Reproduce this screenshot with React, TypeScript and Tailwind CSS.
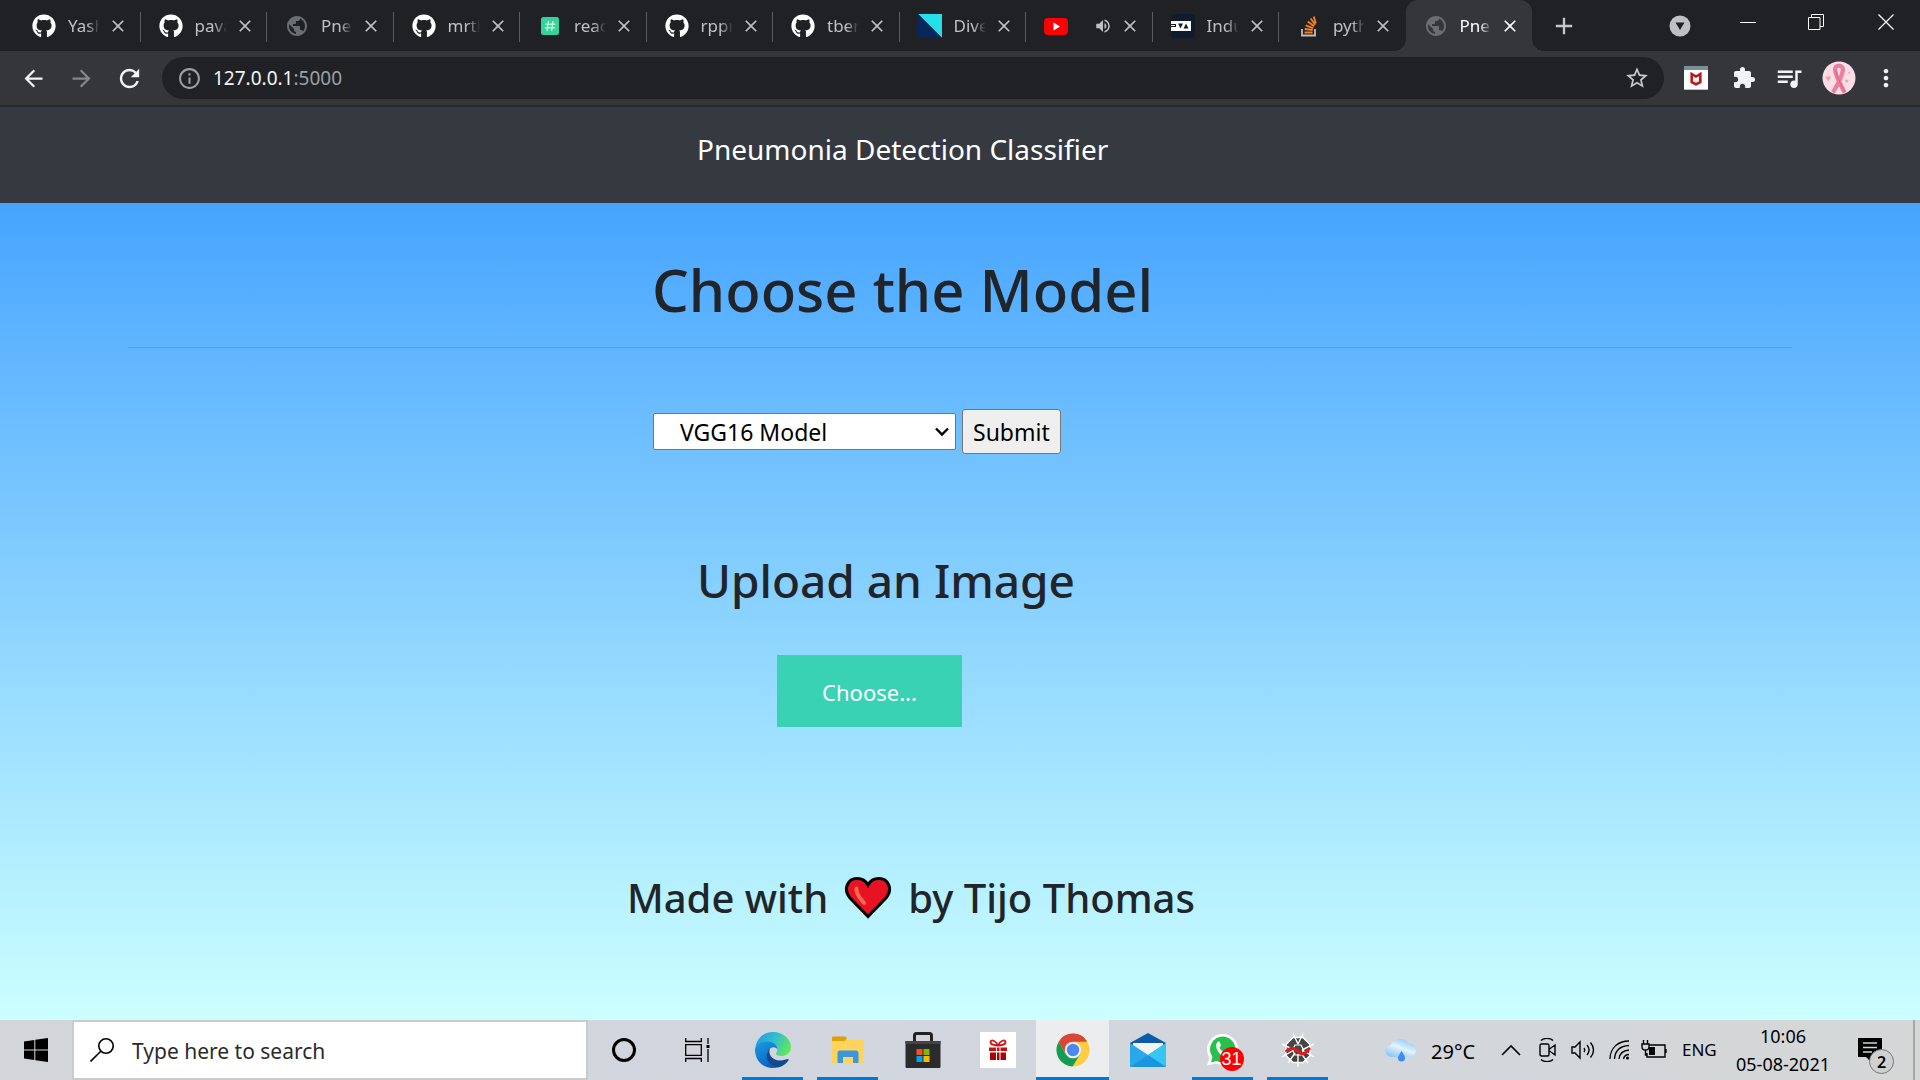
import React from 'react'
import {
  MdAdd,
  MdArrowBack,
  MdArrowForward,
  MdClose,
  MdExtension,
  MdInfoOutline,
  MdMoreVert,
  MdPublic,
  MdQueueMusic,
  MdRefresh,
  MdStarBorder,
  MdVolumeUp,
} from 'react-icons/md'
import { FaGithub } from 'react-icons/fa'

type TabItem = {
  title: string
  icon: React.ReactNode
  playing?: boolean
  active?: boolean
}

const GithubIcon = () => <FaGithub className="size-6 text-white" />

const GlobeIcon = () => <MdPublic className="size-6 text-[#6a6e73]" />

const HashIcon = () => (
  <svg viewBox="0 0 24 24" className="size-6">
    <rect x="3" y="3" width="18" height="18" rx="2.5" fill="#34d399" />
    <path d="M10.5 7 9 17M15 7l-1.500 10M7.500 10.300h10M6.800 13.800h10" stroke="#b9f8dc" strokeWidth="1.500" fill="none" />
  </svg>
)

const DiveIcon = () => (
  <svg viewBox="0 0 24 24" className="size-6">
    <path d="M0 0h24v24z" fill="#22dfea" />
    <path d="M0 0v24h24z" fill="#04285c" />
  </svg>
)

const YoutubeIcon = () => (
  <svg viewBox="0 0 24 24" className="size-6">
    <rect y="4" width="24" height="17" rx="4" fill="#f00" />
    <path d="M9.500 8.500v8l6.500-4z" fill="#fff" />
  </svg>
)

const InduIcon = () => (
  <svg viewBox="0 0 24 24" className="size-6">
    <rect width="24" height="24" rx="4" fill="#101c2b" />
    <path d="M0 7h20v10H0z" fill="#fff" />
    <path d="M0 10h5v3H0zM7 9.500h5l-2.500 5zM12.500 14.500h5L15 9.500z" fill="#101c2b" />
    <path d="M0 11.500h4" stroke="#fff" />
  </svg>
)

const StackIcon = () => (
  <svg viewBox="0 0 24 24" className="size-6" fill="none">
    <path d="M5 15v6.500h13V15" stroke="#bcbec0" strokeWidth="1.800" />
    <path d="M7.500 18.500h8M7.700 15l8 1M8.700 11.300l7.500 2.800M10.800 7.400l6.300 4.900M13.700 4.500l4.500 6.300M16.800 2.500l2 7" stroke="#f48024" strokeWidth="1.900" />
  </svg>
)

const TABS: TabItem[] = [
  { title: 'Yash', icon: <GithubIcon /> },
  { title: 'pava', icon: <GithubIcon /> },
  { title: 'Pneu', icon: <GlobeIcon /> },
  { title: 'mrtk', icon: <GithubIcon /> },
  { title: 'reac', icon: <HashIcon /> },
  { title: 'rppr', icon: <GithubIcon /> },
  { title: 'tber', icon: <GithubIcon /> },
  { title: 'Dive', icon: <DiveIcon /> },
  { title: '', icon: <YoutubeIcon />, playing: true },
  { title: 'Indu', icon: <InduIcon /> },
  { title: 'pyth', icon: <StackIcon /> },
  { title: 'Pne', icon: <GlobeIcon />, active: true },
]

const Tab = ({ tab }: { tab: TabItem }) => (
  <div
    className={
      tab.active
        ? 'relative flex h-full min-w-0 flex-1 items-center rounded-t-xl bg-[#35363a] pl-[18px] text-white'
        : 'relative flex h-full min-w-0 flex-1 items-center pl-[18px] text-[#bdc1c6]'
    }
  >
    {tab.active && (
      <>
        <span className="absolute bottom-0 -left-3 size-3 bg-[radial-gradient(circle_at_0_0,#202124_12px,#35363a_12px)]" />
        <span className="absolute -right-3 bottom-0 size-3 bg-[radial-gradient(circle_at_100%_0,#202124_12px,#35363a_12px)]" />
      </>
    )}
    <button type="button" className="flex items-center gap-3" aria-label={tab.title || 'Video'}>
      {tab.icon}
      {tab.playing ? (
        <span className="flex w-8 justify-end">
          <MdVolumeUp className="size-[18px]" />
        </span>
      ) : (
        <span className="w-8 overflow-hidden mask-[linear-gradient(90deg,#000_60%,transparent)] text-left text-[17px] leading-6 whitespace-nowrap">
          {tab.title}
        </span>
      )}
    </button>
    <button type="button" className="ml-2 shrink-0" aria-label="Close tab">
      <MdClose className="size-5" />
    </button>
    {!tab.active && tab.title !== 'pyth' && (
      <span className="absolute top-3 right-0 h-[30px] w-px bg-[#5a5c60]" />
    )}
  </div>
)

const TabStrip = () => (
  <div className="flex h-[51px] bg-[#202124] pl-[14px]">
    <div className="flex min-w-0 flex-1">
      {TABS.map((tab, i) => (
        <Tab key={i} tab={tab} />
      ))}
    </div>
    <div className="flex w-[388px] shrink-0 justify-between pr-[26px] pl-[18px] text-white">
      <button type="button" aria-label="New tab" className="self-center">
        <MdAdd className="size-7 text-[#c4c7cb]" />
      </button>
      <div className="flex h-[43px] items-center">
        <button type="button" aria-label="Search tabs" className="mt-2 mr-[49px]">
          <svg viewBox="0 0 22 22" className="size-[22px]">
            <circle cx="11" cy="11" r="10.500" fill="#bdc1c6" />
            <path d="M6.500 7.500h9L11 15z" fill="#202124" />
          </svg>
        </button>
        <button type="button" aria-label="Minimize" className="mr-[52px]">
          <svg viewBox="0 0 16 16" className="size-4" fill="none" stroke="currentColor">
            <path d="M0 8.500h16" />
          </svg>
        </button>
        <button type="button" aria-label="Restore" className="mr-[54px]">
          <svg viewBox="0 0 16 16" className="size-4" fill="none" stroke="currentColor">
            <path d="M.5 3.500h11.500v12H.5zM3.500 3.500v-3h12v12H12" />
          </svg>
        </button>
        <button type="button" aria-label="Close">
          <svg viewBox="0 0 16 16" className="size-4" fill="none" stroke="currentColor" strokeWidth="1.300">
            <path d="m.5.5 15 15M15.500.5l-15 15" />
          </svg>
        </button>
      </div>
    </div>
  </div>
)

const McAfeeIcon = () => (
  <svg viewBox="0 0 24 24" className="size-6">
    <rect width="24" height="24" rx="1" fill="#fff" />
    <path d="M0 0h24v4H0z" fill="#78909c" />
    <path d="M0 23h24v1H0z" fill="#bbb" />
    <path d="M7.700 8v8.200l4.300 2 4.300-2V8L12 10.500z" fill="none" stroke="#c01818" strokeWidth="2.600" />
  </svg>
)

const RibbonAvatar = () => (
  <svg viewBox="0 0 34 34" className="size-[34px]">
    <circle cx="17" cy="17" r="16.500" fill="#fbdde6" />
    <path d="M4 17c-1-2 1.500-2.500 2.500-1 .5-2 3-1 2 1l-2.200 3.500zM23 20c-.5-1.500 1-2 1.800-.8.800-1.200 2.200-.4 1.500 1L25 22zM26 11l1.300 2.300 1-2.600z" fill="#f3a3a8" />
    <path d="M22.500 31.500C19 24 13.500 15 13 8.500c-.2-5 8-5 8 0C20.500 15 15.500 24 11 31.500" fill="none" stroke="#ea7fa0" strokeWidth="4.200" />
    <path d="M13.300 8.500c1 7 5.500 15 9.500 22.500" fill="none" stroke="#e0668c" strokeWidth="1.200" />
  </svg>
)

const Toolbar = () => (
  <div className="flex h-[56px] items-center border-b-2 border-[#28292b] bg-[#35363a] px-5 text-[#f1f3f4]">
    <button type="button" aria-label="Back">
      <MdArrowBack className="size-[27px]" />
    </button>
    <button type="button" aria-label="Forward" className="ml-[21px] text-[#85878a]">
      <MdArrowForward className="size-[27px]" />
    </button>
    <button type="button" aria-label="Reload" className="ml-5">
      <MdRefresh className="size-[29px]" />
    </button>
    <div className="ml-[18px] flex h-[42px] flex-1 items-center rounded-full bg-[#202124] pr-[14px] pl-[15px]">
      <MdInfoOutline className="size-[25px] text-[#9aa0a6]" />
      <div className="relative ml-[11px] flex-1 text-[19px] leading-[42px]">
        <span aria-hidden="true">
          127.0.0.1<span className="text-[#9aa0a6]">:5000</span>
        </span>
        <input
          type="text"
          aria-label="Address"
          defaultValue="127.0.0.1:5000"
          className="absolute inset-0 w-full text-transparent outline-none"
        />
      </div>
      <button type="button" aria-label="Bookmark this page">
        <MdStarBorder className="size-[26px] text-[#c4c7cb]" />
      </button>
    </div>
    <div className="ml-5 flex items-center">
      <McAfeeIcon />
      <MdExtension className="ml-6 size-6" />
      <MdQueueMusic className="ml-[18px] size-[30px]" />
      <span className="ml-[18px]">
        <RibbonAvatar />
      </span>
      <button type="button" aria-label="Menu" className="ml-4">
        <MdMoreVert className="size-7" />
      </button>
    </div>
  </div>
)

const HeartIcon = () => (
  <svg viewBox="0 0 48 44" className="h-11 w-12">
    <path
      d="M24 40.500 6 22C-1.500 13 4 2.500 13 2.500c5 0 9 2.500 11 6.500 2-4 6-6.500 11-6.500 9 0 14.500 10.500 7 19.500z"
      fill="#e81224"
      stroke="#000"
      strokeWidth="3"
    />
    <path d="M12.500 12.500c-.5 6 4 10.500 7.500 14.500" fill="none" stroke="#f4694f" strokeWidth="4" strokeLinecap="round" />
  </svg>
)

const Page = () => (
  <div className="flex flex-1 flex-col bg-linear-to-b from-[#3399ff] to-[#ccffff] text-[#212529]">
    <nav className="h-24 bg-[#343a40] pt-[22px] pl-[697px]">
      <a href="#" className="text-[28px] leading-10 text-white">
        Pneumonia Detection Classifier
      </a>
    </nav>
    <main className="mx-32 pt-[51px]">
      <h1 className="ml-[524px] text-[58px] leading-[72px] font-medium">Choose the Model</h1>
      <hr className="mt-[21px] border-black/10" />
      <form className="mt-[61px] ml-[525px] flex items-center gap-[6px] text-[23px]" onSubmit={(e) => e.preventDefault()}>
        <div className="relative">
          <select
            aria-label="Model"
            className="h-[37px] w-[303px] appearance-none rounded-xs border border-[#767676] bg-white pl-[26px] leading-8 text-black"
          >
            <option>VGG16 Model</option>
          </select>
          <svg viewBox="0 0 14 10" className="pointer-events-none absolute top-[14px] right-[7px] h-[10px] w-[14px]">
            <path d="m1 1.500 6 6 6-6" fill="none" stroke="#000" strokeWidth="2.400" />
          </svg>
        </div>
        <button type="submit" className="h-[45px] rounded-[3px] border border-[#767676] bg-[#efefef] px-[10px] leading-8 text-black">
          Submit
        </button>
      </form>
      <h2 className="mt-[97px] ml-[569px] text-[46px] leading-[58px] font-medium">Upload an Image</h2>
      <label className="mt-[46px] ml-[649px] flex h-[72px] w-[185px] items-center justify-center bg-[#39d2b4] pt-[2px] text-[22px] text-white">
        Choose...
        <input type="file" accept="image/*" className="sr-only" />
      </label>
      <h3 className="mt-[146px] ml-[499px] flex items-center text-[40px] leading-[50px] font-medium">
        Made with
        <span className="mx-4">
          <HeartIcon />
        </span>
        by Tijo Thomas
      </h3>
    </main>
  </div>
)

const EdgeIcon = () => (
  <svg viewBox="0 0 36 36" className="size-9">
    <defs>
      <linearGradient id="edgeTop" x1="0" y1="0.300" x2="1" y2="0.700">
        <stop offset="0" stopColor="#1f9fe0" />
        <stop offset="0.500" stopColor="#35c1c8" />
        <stop offset="1" stopColor="#66eb4e" />
      </linearGradient>
      <linearGradient id="edgeLeft" x1="0" y1="0" x2="0.500" y2="1">
        <stop offset="0" stopColor="#1b9de2" />
        <stop offset="1" stopColor="#0a63c0" />
      </linearGradient>
    </defs>
    <path d="M.5 15C2 6 9 0 18 0c10 0 18 7 18 15 0 6-5 9-9 9-4.500 0-6-1.500-6-2.500s1.500-1.500 1.500-4c0-4-4-7-9-7C7 10.500 2 13 .5 15z" fill="url(#edgeTop)" />
    <path d="M0 18C0 13 6 9.500 12.500 9.500c6 0 10 4 10 8-2-3-6-3-8.500 0-5 7 0 16 8 18C9.500 38.500 0 29 0 18z" fill="url(#edgeLeft)" />
    <path d="M15.500 15.500c-3.500 6 1.500 13 9.500 13 4 0 6-1.500 8-1.500 1 0 .8 1 0 2-3 4-7.500 6.500-11.500 6.500-8-1.500-14-12-6-20z" fill="#114a8b" />
  </svg>
)

const FolderIcon = () => (
  <svg viewBox="0 0 32 28" className="h-7 w-8">
    <path d="M0 1h13l2 3H32v23H0z" fill="#ffd45e" />
    <path d="M0 2c0-1 .5-1.500 1.500-1.500h12l1.500 2-2.500 2.500H0z" fill="#e0a008" />
    <path d="M5.500 27V17c0-1.500 1-2.500 2.500-2.500h16c1.500 0 2.500 1 2.500 2.500v10H21v-6H11v6z" fill="#3a96dd" />
  </svg>
)

const StoreIcon = () => (
  <svg viewBox="0 0 36 36" className="size-9">
    <path d="M9.500 13V3.500c0-1.500.5-2 2-2h13c1.500 0 2 .5 2 2V13" fill="none" stroke="#222" strokeWidth="3" />
    <path d="M.5 9h35v25.500c0 1-.5 1.500-1.500 1.500H2c-1 0-1.500-.5-1.500-1.500z" fill="#2b2b2b" />
    <path d="M.5 9h35v3H.5z" fill="#444" />
    <path d="M11.500 17h6v6h-6z" fill="#f25022" />
    <path d="M18.500 17h6v6h-6z" fill="#7fba00" />
    <path d="M11.500 24h6v6h-6z" fill="#00a4ef" />
    <path d="M18.500 24h6v6h-6z" fill="#ffb900" />
  </svg>
)

const GiftIcon = () => (
  <svg viewBox="0 0 36 36" className="size-9">
    <path d="M0 0h36v36H0z" fill="#fff" />
    <path d="M18 13.500c-2-5-7-6.500-7.500-3.500-.3 2.500 4 3.500 7.500 3.500zm0 0c2-5 7-6.500 7.500-3.500.3 2.500-4 3.500-7.500 3.500z" fill="none" stroke="#d01418" strokeWidth="1.800" />
    <path d="M9 15.500h7v3.500H9zM20.500 15.500h6.500v3.500h-6.500zM17 15.500h2.500v3.500H17z" fill="#c81014" />
    <path d="M10 20.500h6v7.500h-6zM20.500 20.500H26v7.500h-5.500zM17 20.500h2.500v7.500H17z" fill="#a80508" />
  </svg>
)

const ChromeIcon = () => (
  <svg viewBox="0 0 34 34" className="size-[34px]">
    <circle cx="17" cy="17" r="16.500" fill="#ffcd40" />
    <path d="M2.700 8.700A16.500 16.500 0 0 1 31.300 8.700H17a8.300 8.300 0 0 0-7.200 12.400z" fill="#db4437" />
    <path d="M2.700 8.700A16.500 16.500 0 0 0 16.500 33.500l7.700-12.300a8.300 8.300 0 0 1-14.400 0z" fill="#0f9d58" />
    <circle cx="17" cy="17" r="8" fill="#f1f1f1" />
    <circle cx="17" cy="17" r="6.200" fill="#4a88f4" />
  </svg>
)

const MailIcon = () => (
  <svg viewBox="0 0 36 34" className="h-[34px] w-9">
    <path d="M0 10 18 0l18 10v6H0z" fill="#0d5cab" />
    <path d="M3 10h30v6L18 25 3 16z" fill="#f4f4f4" />
    <path d="M0 10l18 12L36 10v24H0z" fill="#2aa9ea" />
    <path d="M18 22 36 10v24z" fill="#36c5f4" />
    <path d="M18 22 36 34H0z" fill="#1488d8" opacity=".6" />
  </svg>
)

const WhatsappIcon = () => (
  <span className="relative">
    <svg viewBox="0 0 34 34" className="size-[34px]">
      <path d="M17 1a16 15.500 0 1 1-7.500 29.500L1 32.500l2.500-7.800A15.500 15.500 0 0 1 17 1z" fill="#fff" />
      <path d="M17 3.500a13 13 0 1 1-6.500 24.500l-5.500 1.500 1.500-5.500A13 13 0 0 1 17 3.500z" fill="#28c04c" />
      <path d="M11 9.500c1.500-1.500 2.500-1 3 .5l1 2.500-1.500 2c1 2.500 3 4.500 5.500 5.500l2-1.500 3.500 1.500c.5 3-2.500 4.500-5 4C13.500 22.500 8 15 11 9.500z" fill="#fff" />
    </svg>
    <span className="absolute -right-1 -bottom-1 flex size-6 items-center justify-center rounded-full bg-[#f00] font-['Liberation_Sans',sans-serif] text-[18px] leading-6 text-white">
      31
    </span>
  </span>
)

const SpiderIcon = () => (
  <svg viewBox="0 0 36 36" className="size-9" fill="none">
    <path d="M13 5.500h10l7 7v11l-7 7H13l-7-7v-11z" fill="#454545" />
    <path d="M18 12 13 1.500M18 12l5-10.500M14 18 2 12M14 18 2 25M22 18l12-6M22 18l12 7M18 22v13M15 21 8 31M21 21l7 10" stroke="#fff" strokeWidth="1.400" />
    <path d="M13 5.500h10l7 7v11l-7 7H13l-7-7v-11z" stroke="#fff" strokeWidth="1.500" />
    <path d="M15 13h6l2.500 5-2.500 5h-6l-2.500-5z" stroke="#fff" strokeWidth="1.200" />
    <path d="M6 20c3-4 6-5 10-2s7 5 9 3 3-3 5-5" stroke="#e3191b" strokeWidth="3" />
  </svg>
)

const TaskViewIcon = () => (
  <svg viewBox="0 0 26 24" className="h-6 w-[26px]" fill="none" stroke="#000" strokeWidth="1.300">
    <path d="M.7 6.700h15.600v10.600H.7zM.7 0v3.500h15.600V0M.7 24v-3.500h15.600V24M23 0v6M23 11v13" />
    <path d="M21.500 7h3v3h-3z" fill="#000" stroke="none" />
  </svg>
)

type AppItem = {
  name: string
  icon: React.ReactNode
  running?: boolean
  focused?: boolean
}

const APPS: AppItem[] = [
  { name: 'Task View', icon: <TaskViewIcon /> },
  { name: 'Edge', icon: <EdgeIcon />, running: true },
  { name: 'File Explorer', icon: <FolderIcon />, running: true },
  { name: 'Store', icon: <StoreIcon /> },
  { name: 'Rewards', icon: <GiftIcon /> },
  { name: 'Chrome', icon: <ChromeIcon />, focused: true },
  { name: 'Mail', icon: <MailIcon /> },
  { name: 'WhatsApp', icon: <WhatsappIcon />, running: true },
  { name: 'Spyder', icon: <SpiderIcon />, running: true },
]

const AppButton = ({ app }: { app: AppItem }) => (
  <button
    type="button"
    aria-label={app.name}
    className="relative flex h-full w-[75px] shrink-0 items-center justify-center"
  >
    {app.focused && <span className="absolute inset-x-px inset-y-0 border-b-3 border-[#0078d7] bg-[#ecedef]" />}
    {app.running && <span className="absolute inset-x-[7px] bottom-0 h-[3px] bg-[#0078d7]" />}
    <span className="relative flex">{app.icon}</span>
  </button>
)

const WeatherIcon = () => (
  <svg viewBox="0 0 32 24" className="h-6 w-8">
    <defs>
      <linearGradient id="cloud" x1="0.800" y1="0" x2="0.200" y2="1">
        <stop offset="0" stopColor="#8cc0f2" />
        <stop offset="0.500" stopColor="#e2f4ff" />
        <stop offset="1" stopColor="#8cc3f3" />
      </linearGradient>
    </defs>
    <path d="M7 19a6 6 0 0 1-1-12C8 1.500 15-1.500 21 3c1 .8 1.500 1.500 2 2.500 5-.5 8 2.500 8 6.500s-3 7-7 7z" fill="url(#cloud)" />
    <path d="M16.500 13c2 3 3.500 5 3.500 7a3.500 3.500 0 0 1-7 0c0-2 1.500-4 3.500-7z" fill="#3c8ff0" />
  </svg>
)

const Tray = () => (
  <div className="flex h-full shrink-0 items-center text-black">
    <WeatherIcon />
    <span className="ml-[14px] w-[52px] pt-[3px] text-[20px] leading-6">29°C</span>
    <svg viewBox="0 0 20 12" className="ml-[18px] h-3 w-5" fill="none" stroke="#000" strokeWidth="1.600">
      <path d="m1 11 9-9 9 9" />
    </svg>
    <svg viewBox="0 0 18 24" className="ml-[18px] h-6 w-[18px]" fill="none" stroke="#000" strokeWidth="1.400">
      <path d="M1 7.500c0-1 .5-1.500 1.500-1.500h6c1 0 1.500.5 1.500 1.500v9c0 1-.5 1.500-1.500 1.500h-6C1.500 18 1 17.500 1 16.500zM10.500 11l5.500-4v10l-5.500-4M2 2.500C5-.3 11-.3 14 2.500M2 21.500c3 2.800 9 2.800 12 0" />
    </svg>
    <svg viewBox="0 0 24 20" className="ml-[14px] h-5 w-6" fill="none" stroke="#000" strokeWidth="1.400">
      <path d="M1 7h3l5-5v16l-5-5H1zM13 8c1 1.300 1 2.700 0 4M16 5c2.500 3 2.500 7 0 10M19.500 2.500c4 4.500 4 10.500 0 15" />
    </svg>
    <svg viewBox="0 0 22 22" className="ml-[14px] size-[22px]" fill="none" stroke="#000" strokeWidth="1.300">
      <path d="M1 20C1 9 9 2 20 2M5.500 20C6 12 11 7 20 6.500M10 20c.5-5 4-8.500 10-9M14.500 20c.5-2.500 2-4.500 5.500-4.500" />
      <circle cx="18.500" cy="19" r="1.500" fill="#000" stroke="none" />
    </svg>
    <svg viewBox="0 0 26 20" className="ml-[10px] h-5 w-[26px]" fill="none" stroke="#000" strokeWidth="1.400">
      <path d="M8 5h16v12H6v-4M25 9v4M2.500 0v4M6.500 0v4M1 4h7v3c0 2-1.500 3-3.500 3S1 9 1 7zM4.500 10v5H6" />
      <path d="M8 7h6v8H8z" fill="#000" stroke="none" />
    </svg>
    <span className="ml-[15px] w-9 text-[17px] leading-6">ENG</span>
    <div className="ml-4 w-[98px] text-center text-[18px] leading-[28px]">
      <div>10:06</div>
      <div>05-08-2021</div>
    </div>
    <button type="button" aria-label="Notifications" className="relative mr-[31px] ml-[26px] size-6">
      <svg viewBox="0 0 24 24" className="size-6">
        <path d="M0 0h24v19H13v5l-5-5H0z" fill="#000" />
        <path d="M5 5h14M5 9.500h14M5 14h9" stroke="#d3d5d6" strokeWidth="1.400" />
      </svg>
      <span className="absolute -right-3 -bottom-3 flex size-[25px] items-center justify-center rounded-full border border-[#777] bg-[#cfd0d1] text-[16px] leading-6 font-semibold">
        2
      </span>
    </button>
    <span className="h-full w-[7px] border-l-2 border-[#a5a6a7]" />
  </div>
)

const Taskbar = () => (
  <footer className="flex h-[60px] items-center bg-linear-to-r from-[#d3d5d8] via-[#d1d6df] via-45% to-[#d5d7d7]">
    <button type="button" aria-label="Start" className="flex h-full w-[72px] shrink-0 items-center justify-center">
      <svg viewBox="0 0 24 24" className="size-6">
        <path d="M0 3.500 10.300 2v9.500H0zM11.300 1.800 24 0v11.500H11.300zM0 12.500h10.300V22L0 20.500zM11.300 12.500H24V24l-12.700-1.800z" />
      </svg>
    </button>
    <label className="flex h-full w-[516px] shrink-0 items-center border-2 border-[#cacbcc] bg-white pl-4">
      <svg viewBox="0 0 24 24" className="size-6" fill="none" stroke="#000" strokeWidth="1.600">
        <circle cx="16" cy="8" r="7.200" />
        <path d="M10.800 13.200.5 23.500" />
      </svg>
      <input
        type="text"
        aria-label="Search"
        placeholder="Type here to search"
        className="ml-[18px] flex-1 pt-[2px] text-[21px] leading-8 outline-none placeholder:text-[#2b2b2b]"
      />
    </label>
    <button type="button" aria-label="Cortana" className="flex w-[72px] shrink-0 justify-center">
      <span className="size-6 rounded-full border-3 border-black" />
    </button>
    {APPS.map((app) => (
      <AppButton key={app.name} app={app} />
    ))}
    <div className="flex-1" />
    <Tray />
  </footer>
)

export default function App() {
  return (
    <div className="flex min-h-screen flex-col font-['Noto_Sans',sans-serif]">
      <TabStrip />
      <Toolbar />
      <Page />
      <Taskbar />
    </div>
  )
}
